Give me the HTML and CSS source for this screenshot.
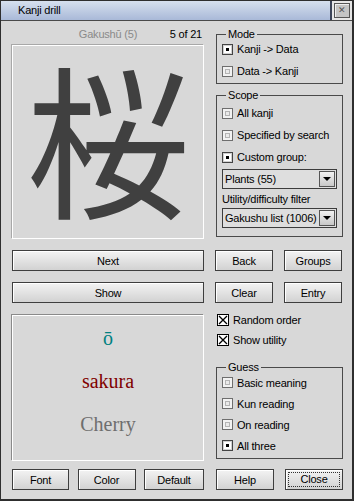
FILE: index.html
```
<!DOCTYPE html>
<html lang="en">

<head>
    <meta charset="UTF-8">
    <title>Kanji drill</title>
    <link rel="stylesheet" href="styles.css">
</head>

<body>
    <div class="window">
        <div class="titlebar">
            <span class="title">Kanji drill</span>
            <div class="close-area"><span class="close-x">&#x2715;</span></div>
        </div>

        <div class="content">
            <div class="top">
                <div class="left">
                    <div class="info">
                        <span></span>
                        <span class="set">Gakushū (5)</span>
                        <span class="count">5 of 21</span>
                    </div>
                    <div class="kanji-box">桜</div>
                </div>

                <div class="right">
                    <fieldset class="group mode">
                        <legend>Mode</legend>
                        <div class="opt"><span class="radio on"></span>Kanji -&gt; Data</div>
                        <div class="opt"><span class="radio"></span>Data -&gt; Kanji</div>
                    </fieldset>

                    <fieldset class="group scope">
                        <legend>Scope</legend>
                        <div class="opt"><span class="radio"></span>All kanji</div>
                        <div class="opt"><span class="radio"></span>Specified by search</div>
                        <div class="opt"><span class="radio on"></span>Custom group:</div>
                        <div class="combo"><span>Plants (55)</span><span class="arrow"></span></div>
                        <div class="label">Utility/difficulty filter</div>
                        <div class="combo"><span>Gakushu list (1006)</span><span class="arrow"></span></div>
                    </fieldset>
                </div>
            </div>

            <div class="btn-row">
                <button>Next</button>
                <button>Back</button>
                <button>Groups</button>
            </div>
            <div class="btn-row">
                <button>Show</button>
                <button>Clear</button>
                <button>Entry</button>
            </div>

            <div class="bottom">
                <div class="answer">
                    <div class="on-read">ō</div>
                    <div class="kun-read">sakura</div>
                    <div class="meaning">Cherry</div>
                </div>

                <div class="right">
                    <div class="check"><span class="box"><svg width="10" height="10" viewBox="0 0 10 10"><path d="M1 1L9 9M9 1L1 9" stroke="#000" stroke-width="1.3"/></svg></span>Random order</div>
                    <div class="check"><span class="box"><svg width="10" height="10" viewBox="0 0 10 10"><path d="M1 1L9 9M9 1L1 9" stroke="#000" stroke-width="1.3"/></svg></span>Show utility</div>

                    <fieldset class="group guess">
                        <legend>Guess</legend>
                        <div class="opt"><span class="radio"></span>Basic meaning</div>
                        <div class="opt"><span class="radio"></span>Kun reading</div>
                        <div class="opt"><span class="radio"></span>On reading</div>
                        <div class="opt"><span class="radio on"></span>All three</div>
                    </fieldset>
                </div>
            </div>

            <div class="foot">
                <div class="foot-left">
                    <button>Font</button>
                    <button>Color</button>
                    <button>Default</button>
                </div>
                <div class="foot-right">
                    <button>Help</button>
                    <button class="focus"><span>Close</span></button>
                </div>
            </div>
        </div>
    </div>
</body>

</html>
```

FILE: styles.css
```
* {
    box-sizing: border-box;
}

body {
    margin: 0;
    background-color: #d8d8d8;
    font-family: "Liberation Sans", Arial, sans-serif;
    font-size: 11px;
    letter-spacing: -0.2px;
    color: #000;
}

.window {
    width: 354px;
    height: 501px;
    border: 1px solid #2e2e2e;
    border-right-width: 2px;
    border-bottom-width: 2px;
    background-color: #d8d8d8;
}

.titlebar {
    height: 20px;
    display: flex;
    border-bottom: 1px solid #4a4a4a;
    background: linear-gradient(#d6e0ee, #a9b9d8);
}

.title {
    flex: 1;
    padding-left: 17px;
    line-height: 19px;
    font-size: 11px;
}

.close-area {
    width: 22px;
    border-left: 2px solid #3c4458;
    background-color: #e6e6e6;
    padding: 2px 0 0 2px;
}

.close-x {
    display: block;
    width: 16px;
    height: 15px;
    border: 1px solid #555;
    background-color: #c4c4c4;
    box-shadow: inset 1px 1px 0 #eee;
    font-size: 9px;
    line-height: 13px;
    text-align: center;
    color: #555;
}

.content {
    padding: 6px 10px 0 11px;
}

.top {
    display: grid;
    grid-template-columns: 192px 127px;
    column-gap: 12px;
}

.info {
    height: 14px;
    display: grid;
    grid-template-columns: 1fr auto 1fr;
    line-height: 14px;
    margin-bottom: 4px;
}

.set {
    color: #8a8a8a;
}

.count {
    text-align: right;
    padding-right: 2px;
}

.kanji-box {
    height: 194px;
    border: 1px solid #fff;
    box-shadow: -1px -1px 0 #a8a8a8;
    text-align: center;
    font-family: "Noto Sans CJK JP", sans-serif;
    font-size: 164px;
    line-height: 178px;
    color: #404040;
    overflow: hidden;
}

/* group boxes */

.group {
    margin: 0;
    min-width: 0;
    border: 1px solid #4a4a4a;
    padding: 0 4px 0 5px;
}

.group legend {
    padding: 0 2px;
    margin-left: 4px;
    line-height: 14px;
}

.opt {
    height: 22px;
    display: flex;
    align-items: center;
    white-space: nowrap;
}

.mode {
    padding-bottom: 1px;
}

.mode .opt:first-of-type {
    margin-top: -3px;
}

.scope {
    margin-top: 4px;
    padding-bottom: 8px;
}

.radio {
    width: 11px;
    height: 11px;
    margin-right: 4px;
    border: 1px solid #6e6e6e;
    background-color: #eaeaea;
    box-shadow: inset 0 0 0 2px #f2f2f2, inset 0 0 0 3px #b4b4b4;
    flex-shrink: 0;
    position: relative;
}

.radio.on {
    border-color: #444;
    background-color: #fff;
    box-shadow: inset 0 0 0 1px #d0d0d0;
}

.radio.on::after {
    content: "";
    position: absolute;
    left: 3px;
    top: 3px;
    width: 3px;
    height: 3px;
    background-color: #000;
}

.combo {
    height: 20px;
    margin-top: 1px;
    border: 1px solid #3c3c3c;
    background-color: #dedede;
    display: flex;
    align-items: center;
    justify-content: space-between;
    padding-left: 2px;
    padding-right: 1px;
    margin-right: 1px;
    white-space: nowrap;
}

.arrow {
    width: 16px;
    height: 16px;
    flex-shrink: 0;
    border: 1px solid #555;
    background: linear-gradient(#f2f2f2, #c8c8c8);
    position: relative;
}

.arrow::after {
    content: "";
    position: absolute;
    left: 3px;
    top: 5px;
    border-left: 4px solid transparent;
    border-right: 4px solid transparent;
    border-top: 4px solid #000;
}

.label {
    height: 14px;
    line-height: 14px;
    margin-top: 3px;
    margin-bottom: 2px;
}

/* buttons */

.btn-row {
    display: grid;
    grid-template-columns: 192px 58px 58px;
    justify-content: space-between;
    margin-top: 11px;
}

button {
    height: 21px;
    padding: 0;
    font-family: "Liberation Sans", Arial, sans-serif;
    font-size: 11px;
    letter-spacing: -0.2px;
    color: #000;
    border: 1px solid #3e3e3e;
    background: linear-gradient(#f3f3f3, #d2d2d2);
    box-shadow: inset 1px 1px 0 #fff;
}

.focus span {
    display: block;
    margin: 2px;
    height: 15px;
    line-height: 13px;
    border: 1px dotted #333;
}

/* lower part */

.bottom {
    display: grid;
    grid-template-columns: 192px 127px;
    column-gap: 12px;
    margin-top: 11px;
}

.answer {
    height: 146px;
    margin-top: 1px;
    border: 1px solid #fff;
    box-shadow: -1px -1px 0 #8a8a8a;
    text-align: center;
    font-family: "Liberation Serif", "Times New Roman", serif;
    font-size: 20px;
    letter-spacing: 0;
    padding-top: 1px;
}

.answer div {
    height: 43px;
    line-height: 43px;
}

.on-read {
    color: #008080;
}

.kun-read {
    color: #800000;
}

.meaning {
    color: #6e6e6e;
}

.check {
    height: 20px;
    display: flex;
    align-items: center;
    margin-left: 1px;
}

.check:first-child {
    margin-top: -4px;
}

.box {
    width: 12px;
    height: 12px;
    border: 1px solid #000;
    background-color: #fff;
    margin-right: 4px;
    display: flex;
    align-items: center;
    justify-content: center;
}

.guess {
    margin-top: 10px;
    padding-bottom: 2px;
}

.guess .opt {
    height: 21px;
}

.guess .opt:first-of-type {
    margin-top: -2px;
}

.foot {
    display: grid;
    grid-template-columns: 192px 127px;
    column-gap: 12px;
    margin-top: 8px;
}

.foot-left {
    display: grid;
    grid-template-columns: 57px 58px 60px;
    justify-content: space-between;
}

.foot-right {
    display: grid;
    grid-template-columns: 58px 58px;
    justify-content: space-between;
}
```
